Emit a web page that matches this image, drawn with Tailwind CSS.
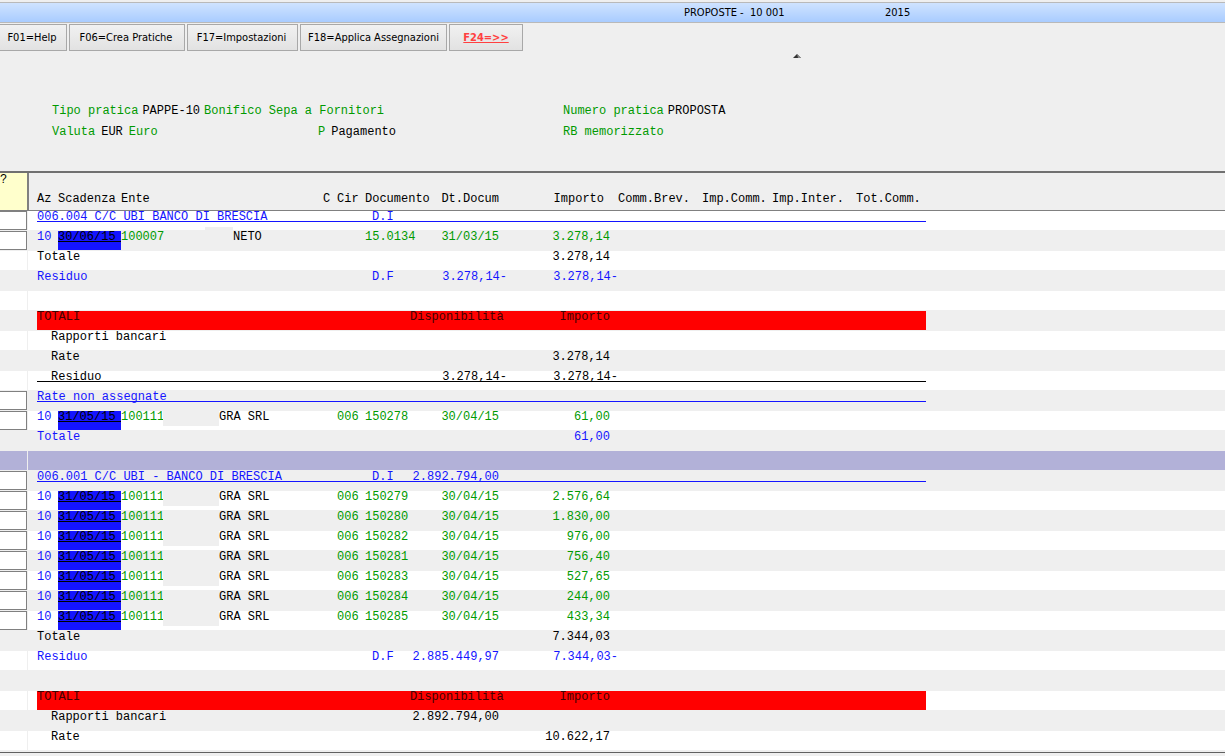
<!DOCTYPE html>
<html lang="it">
<head>
<meta charset="utf-8">
<title>PROPOSTE - 10 001</title>
<script src="https://cdn.jsdelivr.net/npm/@tailwindcss/browser@4"></script>
</head>
<body class="min-h-screen overflow-hidden bg-[#efefef] font-['DejaVu_Sans_Condensed','DejaVu_Sans',sans-serif] text-[11px] text-black">
<header class="mt-0.5 grid h-[21px] grid-cols-[684px_201px_1fr] items-center border-y border-[#b9b9b9] bg-linear-to-b from-[#cfe3ff] to-[#a9ccff] pt-0.5">
  <h1 class="col-start-2 whitespace-pre">PROPOSTE -  10 001</h1>
  <span>2015</span>
</header>

<nav class="flex h-[37px] gap-0.5 pt-px" aria-label="Funzioni">
  <button class="h-[27px] w-[67px] whitespace-nowrap border border-l-0 border-[#a8a8a8] bg-linear-to-b from-[#f1f1f1] to-[#e2e2e2] pt-0.5 pr-0.5">F01=Help</button>
  <button class="h-[27px] w-[116px] whitespace-nowrap border border-[#a8a8a8] bg-linear-to-b from-[#f1f1f1] to-[#e2e2e2] pt-0.5 pr-0.5">F06=Crea Pratiche</button>
  <button class="h-[27px] w-[111px] whitespace-nowrap border border-[#a8a8a8] bg-linear-to-b from-[#f1f1f1] to-[#e2e2e2] pt-0.5 pr-0.5">F17=Impostazioni</button>
  <button class="h-[27px] w-[147px] whitespace-nowrap border border-[#a8a8a8] bg-linear-to-b from-[#f1f1f1] to-[#e2e2e2] pt-0.5">F18=Applica Assegnazioni</button>
  <button class="h-[27px] w-[74px] whitespace-nowrap border border-[#a8a8a8] bg-linear-to-b from-[#f1f1f1] to-[#e2e2e2] pt-0.5 font-bold text-[#ff4040] underline">F24=&gt;&gt;</button>
  <svg class="ml-[268px] mt-7.5 h-1 w-2" viewBox="0 0 8 4" aria-hidden="true"><path d="M0 4 4 0 8 4z" fill="#333"/><path d="M4 0 8 4H5z" fill="#888"/></svg>
</nav>

<section class="grid h-[111px] grid-cols-[266px_245px_1fr] grid-rows-[21px_21px] content-start items-center pt-10 pl-[52px] font-['Liberation_Mono',monospace] text-xs whitespace-nowrap text-[#009a00]">
  <p class="col-span-2 flex gap-1"><span>Tipo pratica</span><span class="text-black">PAPPE-10</span><span>Bonifico Sepa a Fornitori</span></p>
  <p class="flex gap-1"><span>Numero pratica</span><span class="text-black">PROPOSTA</span></p>
  <p class="flex gap-1.5"><span>Valuta</span><span class="text-black">EUR</span><span>Euro</span></p>
  <p class="flex gap-1.5"><span>P</span><span class="text-black">Pagamento</span></p>
  <p>RB memorizzato</p>
</section>

<main class="border-t-2 border-b border-t-[#707070] border-b-[#606060] pb-px font-['Liberation_Mono',monospace] text-xs leading-3">
  <table class="w-full table-fixed border-separate border-spacing-0 whitespace-nowrap">
    <colgroup>
      <col class="w-7"><col class="w-[9px]"><col class="w-[21px]"><col class="w-[63px]"><col class="w-[202px]"><col class="w-[14px]"><col class="w-7"><col class="w-[45px]"><col class="w-[97px]"><col class="w-[111px]"><col class="w-[84px]"><col class="w-[70px]"><col class="w-[84px]"><col class="w-[70px]"><col>
    </colgroup>
    <thead>
      <tr class="h-[38px] text-left *:border-b *:border-[#808080] *:p-0 *:pb-[5px] *:align-bottom *:font-normal">
        <th scope="col" class="border-r bg-[#ffffcc]"><div class="h-[31px]">?</div></th>
        <th class="border-l"></th>
        <th scope="col">Az</th>
        <th scope="col">Scadenza</th>
        <th scope="col">Ente</th>
        <th scope="col">C</th>
        <th scope="col">Cir</th>
        <th scope="col">Documento</th>
        <th scope="col" class="text-right"><div class="pr-2">Dt.Docum</div></th>
        <th scope="col" class="text-right"><div class="pr-3.5">Importo</div></th>
        <th scope="col">Comm.Brev.</th>
        <th scope="col">Imp.Comm.</th>
        <th scope="col">Imp.Inter.</th>
        <th scope="col">Tot.Comm.</th>
        <th></th>
      </tr>
    </thead>
    <tbody id="righe" class="[&_td]:border-b [&_td]:border-b-[#efefef] [&_td]:p-0 [&_td]:align-top"></tbody>
  </table>
</main>

<script>
const BLU = 'text-[#1414ff]', VERDE = 'text-[#009a00]', NERO = 'text-black';
const rata = (doc, importo) => ({tipo: 'rata', data: '31/05/15', ente: '100111', nome: 'GRA SRL', cir: '006', doc, dt: '30/04/15', importo});
const righe = [
  {tipo: 'titolo', testo: '006.004 C/C UBI BANCO DI BRESCIA', doc: 'D.I', colore: BLU, linea: 'border-[#1414ff]', campo: true},
  {tipo: 'rata', data: '30/06/15', ente: '100007', nome: 'NETO', cir: '', doc: '15.0134', dt: '31/03/15', importo: '3.278,14'},
  {testo: 'Totale', importo: '3.278,14', colore: NERO},
  {testo: 'Residuo', doc: 'D.F', dt: '3.278,14-', importo: '3.278,14-', colore: BLU},
  {},
  {tipo: 'totali'},
  {testo: 'Rapporti bancari', rientro: true, colore: NERO},
  {testo: 'Rate', rientro: true, importo: '3.278,14', colore: NERO},
  {tipo: 'titolo', testo: 'Residuo', rientro: true, dt: '3.278,14-', importo: '3.278,14-', colore: NERO, linea: 'border-black'},
  {tipo: 'titolo', testo: 'Rate non assegnate', colore: BLU, linea: 'border-[#1414ff]', campo: true},
  rata('150278', '61,00'),
  {testo: 'Totale', importo: '61,00', colore: BLU},
  {tipo: 'separatore'},
  {tipo: 'titolo', testo: '006.001 C/C UBI - BANCO DI BRESCIA', doc: 'D.I', dt: '2.892.794,00', colore: BLU, linea: 'border-[#1414ff]', campo: true},
  rata('150279', '2.576,64'),
  rata('150280', '1.830,00'),
  rata('150282', '976,00'),
  rata('150281', '756,40'),
  rata('150283', '527,65'),
  rata('150284', '244,00'),
  rata('150285', '433,34'),
  {testo: 'Totale', importo: '7.344,03', colore: NERO},
  {testo: 'Residuo', doc: 'D.F', dt: '2.885.449,97', importo: '7.344,03-', colore: BLU},
  {},
  {tipo: 'totali'},
  {testo: 'Rapporti bancari', rientro: true, dt: '2.892.794,00', colore: NERO},
  {testo: 'Rate', rientro: true, importo: '10.622,17', colore: NERO}
];
// Amounts keep their digits aligned; a trailing minus goes in the space on their right.
const numero = (v = '') => `<div class="text-right ${v.endsWith('-') ? '' : 'pr-2'}">${v}</div>`;
document.getElementById('righe').innerHTML = righe.map((r, i) => {
  const sfondo = r.tipo === 'separatore' ? 'bg-[#b2b1d8]' : i % 2 ? 'bg-[#efefef]' : 'bg-white';
  const campo = r.campo || r.tipo === 'rata'
    ? `<input type="text" aria-label="Opzione riga ${i + 1}" class="block h-[19px] w-full border border-l-0 border-[#808080] bg-white">` : '';
  let celle;
  if (r.tipo === 'rata') {
    celle = `<td class="${BLU}">10</td>
      <td class="bg-[#1414ff]"><div class="h-[11px] border-b border-black">${r.data}</div></td>
      <td><div class="flex"><span class="w-[42px] ${VERDE}">${r.ente}</span>${r.nome === 'NETO'
        ? '<span class="relative w-[70px]"><span class="absolute -top-1 right-0 h-1 w-7 bg-[#efefef]"></span></span>'
        : '<span class="h-[15px] w-14 bg-[#efefef]"></span>'}<span>${r.nome}</span></div></td>
      <td></td><td class="${VERDE}">${r.cir}</td><td class="${VERDE}">${r.doc}</td>
      <td class="${VERDE}">${numero(r.dt)}</td><td class="${VERDE}">${numero(r.importo)}</td><td colspan="5"></td>`;
  } else if (r.tipo === 'totali') {
    celle = `<td colspan="6" class="bg-[#ff0000] text-[#400000]">TOTALI</td>
      <td class="bg-[#ff0000] text-[#400000]">${numero('Disponibilità')}</td>
      <td class="bg-[#ff0000] text-[#400000]">${numero('Importo')}</td>
      <td colspan="4" class="bg-[#ff0000]"></td><td></td>`;
  } else {
    const l = r.tipo === 'titolo' ? 'h-[11px] border-b ' + r.linea : '';
    celle = `<td colspan="5"><div class="${l} ${r.rientro ? 'pl-[14px]' : ''}">${r.testo || ''}</div></td>
      <td><div class="${l} pl-[7px]">${r.doc || ''}</div></td>
      <td><div class="${l}">${numero(r.dt)}</div></td>
      <td><div class="${l}">${numero(r.importo)}</div></td>
      <td colspan="4"><div class="${l}"></div></td><td></td>`;
  }
  return `<tr class="h-5 ${sfondo} ${r.colore || ''}"><td class="border-r border-r-[#efefef]">${campo}</td><td></td>${celle}</tr>`;
}).join('');
</script>
</body>
</html>
